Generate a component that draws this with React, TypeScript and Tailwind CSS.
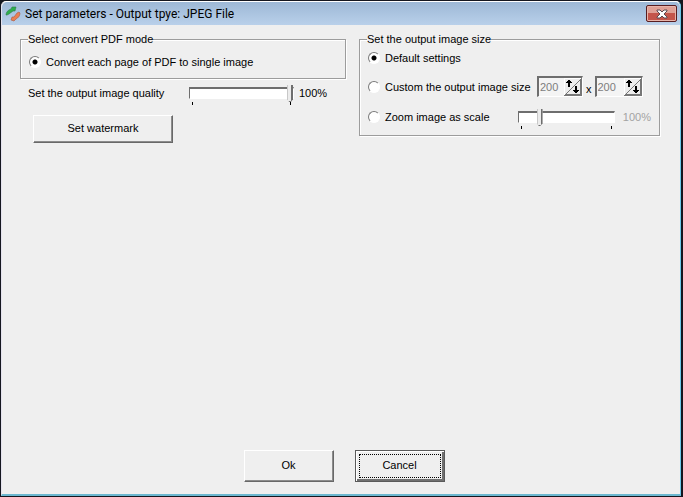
import React, { useState } from 'react';
import clsx from 'clsx';

interface RadioProps {
  name: string;
  label: string;
  checked: boolean;
  onChange: () => void;
}

const RadioOption: React.FC<RadioProps> = ({ name, label, checked, onChange }) => (
  <label className="flex items-center gap-[5px] whitespace-nowrap">
    <input
      type="radio"
      name={name}
      checked={checked}
      onChange={onChange}
      className="size-3 shrink-0 appearance-none rounded-full border border-t-[#7a7a7a] border-l-[#7a7a7a] border-r-white border-b-white bg-white checked:bg-[radial-gradient(circle,#000_0,#000_2px,transparent_3px)]"
    />
    {label}
  </label>
);

interface SliderProps {
  label: string;
  value: number;
  max: number;
  onChange: (value: number) => void;
  className?: string;
}

const Slider: React.FC<SliderProps> = ({ label, value, max, onChange, className }) => (
  <div className={clsx('flex flex-col', className)}>
    <input
      type="range"
      aria-label={label}
      min={0}
      max={max}
      value={value}
      onChange={(e) => onChange(Number(e.target.value))}
      className="block h-[18px] w-full appearance-none bg-transparent [&::-webkit-slider-runnable-track]:h-3 [&::-webkit-slider-runnable-track]:border [&::-webkit-slider-runnable-track]:border-t-2 [&::-webkit-slider-runnable-track]:border-t-[#6e6e6e] [&::-webkit-slider-runnable-track]:border-r-white [&::-webkit-slider-runnable-track]:border-b-white [&::-webkit-slider-runnable-track]:border-l-[#6e6e6e] [&::-webkit-slider-runnable-track]:bg-white [&::-webkit-slider-thumb]:-mt-1 [&::-webkit-slider-thumb]:h-[17px] [&::-webkit-slider-thumb]:w-[6px] [&::-webkit-slider-thumb]:appearance-none [&::-webkit-slider-thumb]:border-r-2 [&::-webkit-slider-thumb]:border-b [&::-webkit-slider-thumb]:border-l [&::-webkit-slider-thumb]:border-l-[#c8c8c8] [&::-webkit-slider-thumb]:border-b-[#6e6e6e] [&::-webkit-slider-thumb]:border-r-[#6e6e6e] [&::-webkit-slider-thumb]:bg-[#ececec] [&::-webkit-slider-thumb]:[clip-path:polygon(0_0,100%_0,100%_85%,60%_100%,40%_100%,0_85%)]"
    />
    <div className="flex justify-between px-[3px]">
      <span className="h-[3px] w-px bg-black" />
      <span className="h-[3px] w-px bg-black" />
    </div>
  </div>
);

interface SpinProps {
  label: string;
  value: number;
  onChange: (value: number) => void;
  className?: string;
}

const SpinBox: React.FC<SpinProps> = ({ label, value, onChange, className }) => (
  <div
    className={clsx(
      'flex h-[21px] border-t-2 border-r border-b border-l-2 border-t-[#6e6e6e] border-r-white border-b-white border-l-[#6e6e6e] bg-[#f4f4f4]',
      className,
    )}
  >
    <input
      type="text"
      aria-label={label}
      value={value}
      onChange={(e) => onChange(Number(e.target.value) || 0)}
      className="min-w-0 flex-1 bg-transparent pl-px text-[#7d7d7d] outline-none"
    />
    <div className="relative flex w-[18px] shrink-0">
      <svg viewBox="0 0 18 18" className="pointer-events-none absolute inset-0 size-full" shapeRendering="crispEdges">
        <rect width="18" height="18" fill="#ececec" />
        <path d="M0.5 17V0.5H17" stroke="#fff" fill="none" />
        <path d="M0 17.5H17.5V0M1 16.5H16.5V1" stroke="#777" fill="none" />
        <path d="M1 17L17 1" stroke="#777" shapeRendering="auto" />
        <path d="M4 2h2v1h1v1h1v1h-2v4h-2v-4h-2v-1h1v-1h1z" fill="#000" />
        <path d="M11 8h2v4h2v1h-1v1h-1v1h-2v-1h-1v-1h-1v-1h2z" fill="#000" />
      </svg>
      <button type="button" aria-label={`Increase ${label}`} onClick={() => onChange(value + 1)} className="flex-1" />
      <button type="button" aria-label={`Decrease ${label}`} onClick={() => onChange(value - 1)} className="flex-1" />
    </div>
  </div>
);

interface GroupProps {
  title: string;
  className?: string;
  children: React.ReactNode;
}

const GroupBox: React.FC<GroupProps> = ({ title, className, children }) => (
  <fieldset
    className={clsx(
      'min-w-0 border border-[#9c9c9c] px-2 shadow-[1px_1px_0_#fff,inset_1px_1px_0_#fff]',
      className,
    )}
  >
    <legend className="-ml-px bg-[#efefef] leading-[14px]">{title}</legend>
    {children}
  </fieldset>
);

interface ButtonProps {
  focused?: boolean;
  className?: string;
  children: React.ReactNode;
}

const PushButton: React.FC<ButtonProps> = ({ focused, className, children }) => (
  <button
    type="button"
    className={clsx(
      'border bg-[#efefef]',
      focused
        ? 'border-[#5a5a5a] p-[3px] shadow-[inset_1px_1px_0_#fff,inset_-2px_-2px_0_#707070]'
        : 'border-t-white border-r-[#686868] border-b-[#686868] border-l-white pb-[2px] shadow-[inset_-1px_-1px_0_#8c8c8c]',
      className,
    )}
  >
    {focused ? (
      <span className="flex h-full items-center justify-center border border-dotted border-black pb-[2px]">{children}</span>
    ) : (
      children
    )}
  </button>
);

export default function App() {
  const [sizeMode, setSizeMode] = useState('default');
  const [quality, setQuality] = useState(100);
  const [zoom, setZoom] = useState(100);
  const [width, setWidth] = useState(200);
  const [height, setHeight] = useState(200);

  return (
    <div className="h-screen bg-[#14161f] pt-px pr-[2px] pb-px pl-px font-['Liberation_Sans',Arial,sans-serif] text-[11px] leading-[14px] text-black">
      <div className="flex h-full flex-col rounded-t-[5px] border-t border-r border-b-2 border-l border-t-white border-r-[#6cc8ea] border-b-[#6cb8d0] border-l-[#e4e2ee] bg-[#efefef]">
        <header className="flex h-[23px] shrink-0 items-center rounded-t-[5px] bg-linear-to-b from-[#9db8d6] to-[#b9d0ea] pr-[3px] pl-[3px]">
          <svg viewBox="0 0 16 16" className="size-4">
            <path d="M1 9C1 6 3 4 6 3L7 1L11 1L10 5L8 5L4 8L2 9Z" fill="#2fae4c" stroke="#2c7d4c" strokeWidth=".6" />
            <path d="M15 7C15 10 13 12 11 13L9 15L6 14L7 11L9 11L12 7L14 6Z" fill="#ea7f50" stroke="#a9553f" strokeWidth=".6" />
          </svg>
          <h1 className="ml-1 flex-1 font-[Roboto,sans-serif] text-[12px] leading-4">
            Set parameters - Output tpye: JPEG File
          </h1>
          <button
            type="button"
            aria-label="Close"
            className="flex h-[17px] w-[31px] items-center justify-center rounded-[2px] border border-[#571d20] bg-linear-to-b from-[#dfa095] from-45% to-[#c4554a] to-50% shadow-[inset_0_0_0_1px_#e8b4aa]"
          >
            <svg viewBox="0 0 12 10" className="h-[10px] w-3">
              <path d="M1 1h3l2 2 2-2h3v1L8 5l3 3v1H8L6 7 4 9H1V8l3-3-3-3z" fill="#fff" stroke="#5b4a52" strokeWidth="1" />
            </svg>
          </button>
        </header>

        <main className="grid grid-cols-[326fr_301fr] items-start gap-x-[13px] pt-[7px] pr-5 pl-[18px]">
          <div>
            <GroupBox title="Select convert PDF mode" className="h-[47px]">
              <div className="pt-[9px]">
                <RadioOption
                  name="mode"
                  label="Convert each page of PDF to single image"
                  checked
                  onChange={() => {}}
                />
              </div>
            </GroupBox>
            <div className="flex items-start pt-[5px] pl-2">
              <span className="w-[161px] pt-[2px]">Set the output image quality</span>
              <Slider label="Set the output image quality" value={quality} max={100} onChange={setQuality} className="w-[105px]" />
              <output className="pt-[2px] pl-[5px]">{quality}%</output>
            </div>
            <PushButton className="mt-[10px] ml-[13px] h-7 w-[140px]">Set watermark</PushButton>
          </div>

          <GroupBox title="Set the output image size" className="h-[104px]">
            <div className="pt-[5px]">
              <RadioOption
                name="size"
                label="Default settings"
                checked={sizeMode === 'default'}
                onChange={() => setSizeMode('default')}
              />
            </div>
            <div className="flex items-center pt-[11px]">
              <div className="w-[169px]">
                <RadioOption
                  name="size"
                  label="Custom the output image size"
                  checked={sizeMode === 'custom'}
                  onChange={() => setSizeMode('custom')}
                />
              </div>
              <SpinBox label="width" value={width} onChange={setWidth} className="w-[46px]" />
              <span className="px-[3px] pt-1">x</span>
              <SpinBox label="height" value={height} onChange={setHeight} className="w-[48px]" />
            </div>
            <div className="flex items-start pt-[11px]">
              <div className="w-[151px] pt-[2px]">
                <RadioOption
                  name="size"
                  label="Zoom image as scale"
                  checked={sizeMode === 'zoom'}
                  onChange={() => setSizeMode('zoom')}
                />
              </div>
              <Slider label="Zoom scale" value={zoom} max={500} onChange={setZoom} className="w-[98px]" />
              <output className="pt-[2px] pl-2 text-[#a3a3a3]">{zoom}%</output>
            </div>
          </GroupBox>
        </main>

        <footer className="mt-auto flex justify-center gap-[21px] pb-3 pl-[6px]">
          <PushButton className="h-8 w-[90px]">Ok</PushButton>
          <PushButton focused className="h-8 w-[90px]">Cancel</PushButton>
        </footer>
      </div>
    </div>
  );
}
